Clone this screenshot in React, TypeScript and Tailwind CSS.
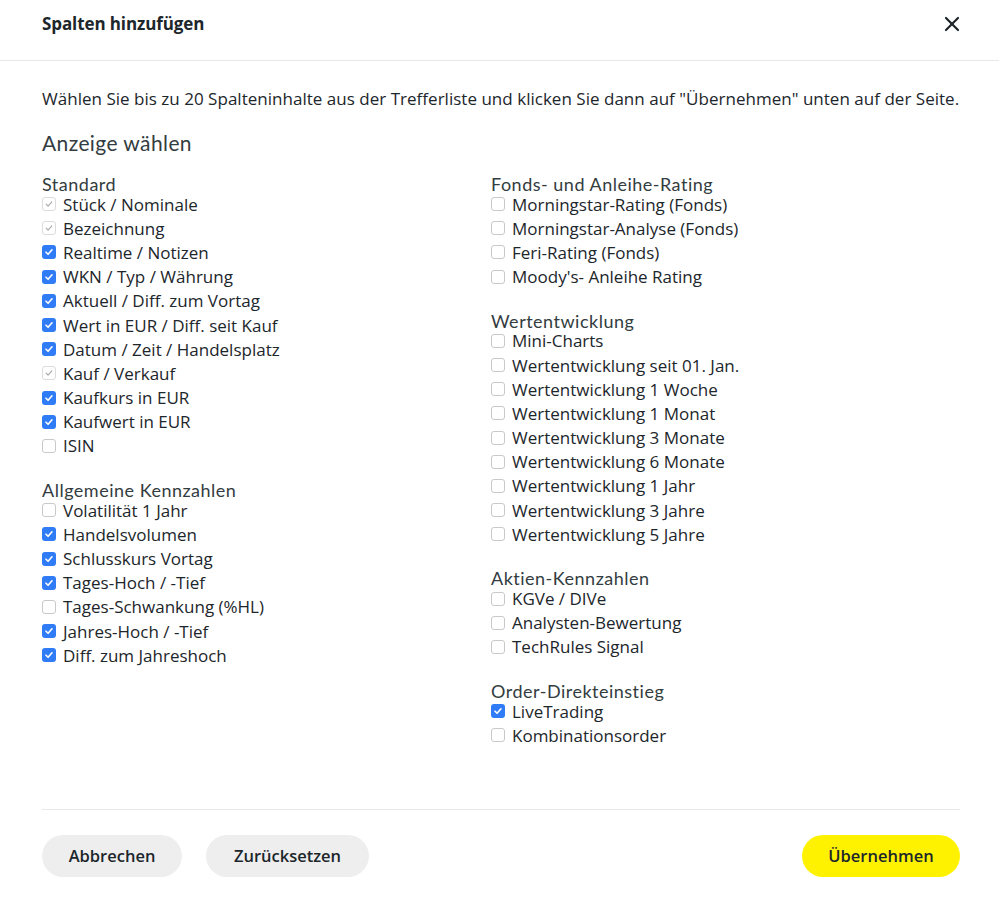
import { X } from "lucide-react";

type Item = { label: string; state: "on" | "off" | "locked" };
type Group = { title: string; items: Item[] };

const on = (label: string): Item => ({ label, state: "on" });
const off = (label: string): Item => ({ label, state: "off" });
const locked = (label: string): Item => ({ label, state: "locked" });

const leftGroups: Group[] = [
  {
    title: "Standard",
    items: [
      locked("Stück / Nominale"),
      locked("Bezeichnung"),
      on("Realtime / Notizen"),
      on("WKN / Typ / Währung"),
      on("Aktuell / Diff. zum Vortag"),
      on("Wert in EUR / Diff. seit Kauf"),
      on("Datum / Zeit / Handelsplatz"),
      locked("Kauf / Verkauf"),
      on("Kaufkurs in EUR"),
      on("Kaufwert in EUR"),
      off("ISIN"),
    ],
  },
  {
    title: "Allgemeine Kennzahlen",
    items: [
      off("Volatilität 1 Jahr"),
      on("Handelsvolumen"),
      on("Schlusskurs Vortag"),
      on("Tages-Hoch / -Tief"),
      off("Tages-Schwankung (%HL)"),
      on("Jahres-Hoch / -Tief"),
      on("Diff. zum Jahreshoch"),
    ],
  },
];

const rightGroups: Group[] = [
  {
    title: "Fonds- und Anleihe-Rating",
    items: [
      off("Morningstar-Rating (Fonds)"),
      off("Morningstar-Analyse (Fonds)"),
      off("Feri-Rating (Fonds)"),
      off("Moody's- Anleihe Rating"),
    ],
  },
  {
    title: "Wertentwicklung",
    items: [
      off("Mini-Charts"),
      off("Wertentwicklung seit 01. Jan."),
      off("Wertentwicklung 1 Woche"),
      off("Wertentwicklung 1 Monat"),
      off("Wertentwicklung 3 Monate"),
      off("Wertentwicklung 6 Monate"),
      off("Wertentwicklung 1 Jahr"),
      off("Wertentwicklung 3 Jahre"),
      off("Wertentwicklung 5 Jahre"),
    ],
  },
  {
    title: "Aktien-Kennzahlen",
    items: [off("KGVe / DIVe"), off("Analysten-Bewertung"), off("TechRules Signal")],
  },
  {
    title: "Order-Direkteinstieg",
    items: [on("LiveTrading"), off("Kombinationsorder")],
  },
];

const Check = ({ state }: { state: Item["state"] }) => {
  if (state === "on") {
    return (
      <span className="w-[14px] h-[14px] rounded-[3px] bg-[#2f7cf6] flex items-center justify-center shrink-0">
        <svg width="10" height="10" viewBox="0 0 10 10" fill="none">
          <path d="M2 5.2 4.1 7.3 8 2.8" stroke="white" strokeWidth="1.6" strokeLinecap="round" strokeLinejoin="round" />
        </svg>
      </span>
    );
  }
  if (state === "locked") {
    return (
      <span className="w-[14px] h-[14px] rounded-[3px] border border-[#dcdcdc] bg-white flex items-center justify-center shrink-0">
        <svg width="10" height="10" viewBox="0 0 10 10" fill="none">
          <path d="M2.2 5.2 4.1 7.2 7.8 2.8" stroke="#a9a9a9" strokeWidth="1.1" strokeLinecap="round" strokeLinejoin="round" />
        </svg>
      </span>
    );
  }
  return <span className="w-[14px] h-[14px] rounded-[3px] border border-[#c9c9c9] bg-white shrink-0" />;
};

const GroupBlock = ({ group }: { group: Group }) => (
  <div className="flex flex-col mb-[25px]">
    <h3 className="font-['Lato',sans-serif] text-[18px] leading-[15px] tracking-[0.5px] text-[#333c40]">{group.title}</h3>
    {group.items.map((item) => (
      <label key={item.label} className="flex items-center h-[24.2px] gap-[7px]">
        <Check state={item.state} />
        <span className="text-[17px] text-[#1c262b] leading-none">{item.label}</span>
      </label>
    ))}
  </div>
);

export default function App() {
  return (
    <div className="w-[999px] h-[912px] bg-white font-['Open_Sans',sans-serif] text-[#1c262b] flex flex-col">
      <div className="h-[61px] border-b border-[#e8e8e8] flex items-start justify-between pl-[42px] pr-[35px] pt-[12px] shrink-0">
        <h2 className="text-[17px] font-bold tracking-[-0.1px] leading-[24px]">Spalten hinzufügen</h2>
        <X size={24} strokeWidth={2.2} className="text-[#1c262b]" />
      </div>

      <div className="pl-[42px] pr-[39px] flex flex-col flex-1">
        <p className="text-[17px] mt-[26px] leading-[24px] tracking-[0.02px]">
          Wählen Sie bis zu 20 Spalteninhalte aus der Trefferliste und klicken Sie dann auf "Übernehmen" unten auf der Seite.
        </p>
        <h2 className="font-['Lato',sans-serif] text-[21px] tracking-[0.4px] text-[#333c40] mt-[18px] leading-[28px]">
          Anzeige wählen
        </h2>

        <div className="grid grid-cols-[449px_1fr] mt-[20px]">
          <div>
            {leftGroups.map((g) => (
              <GroupBlock key={g.title} group={g} />
            ))}
          </div>
          <div>
            {rightGroups.map((g) => (
              <GroupBlock key={g.title} group={g} />
            ))}
          </div>
        </div>

        <div className="mt-auto border-t border-[#e8e8e8] pt-[25px] pb-[35px] flex items-center">
          <button className="h-[42px] w-[140px] rounded-full bg-[#eeeeee] text-[16.5px] font-semibold text-[#1c262b]">
            Abbrechen
          </button>
          <button className="h-[42px] w-[163px] ml-[24px] rounded-full bg-[#eeeeee] text-[16.5px] font-semibold text-[#1c262b]">
            Zurücksetzen
          </button>
          <button className="h-[42px] w-[158px] ml-auto rounded-full bg-[#fff200] text-[16.5px] font-semibold text-[#1c262b]">
            Übernehmen
          </button>
        </div>
      </div>
    </div>
  );
}
